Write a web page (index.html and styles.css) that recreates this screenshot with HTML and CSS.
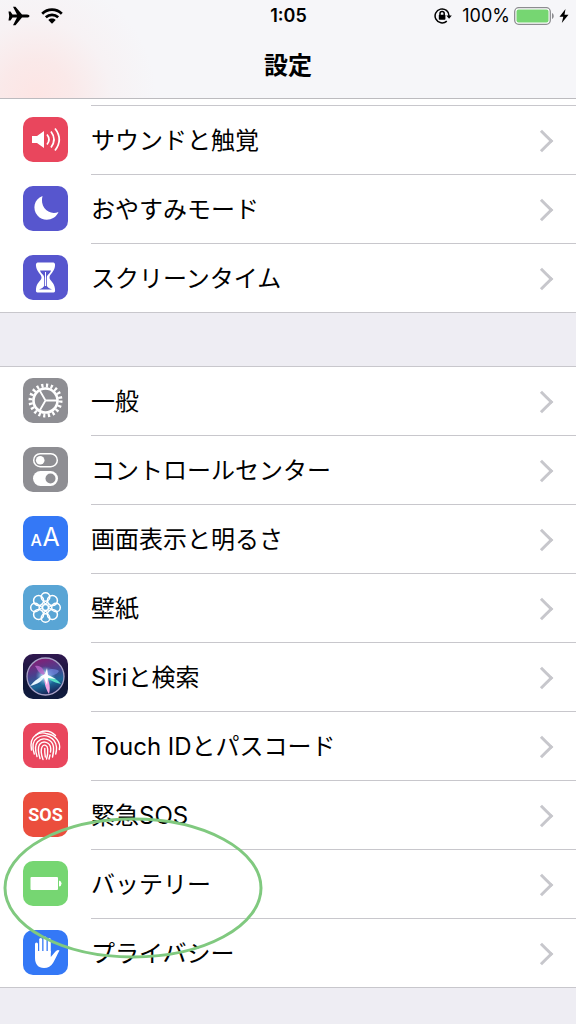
FILE: index.html
```html
<!DOCTYPE html>
<html lang="ja">
<head>
<meta charset="utf-8">
<meta name="viewport" content="width=device-width, initial-scale=1">
<title>設定</title>
<link rel="stylesheet" href="styles.css">
</head>
<body>
<header class="header">
  <div class="status">
    <div class="status-left">
      <svg width="22" height="20" viewBox="0 0 22 20"><path d="M0.500 5.500H2.500L4.500 8.400H9L5 0.700H7.500L14 8.400H19C20.500 8.400 21.500 9.200 21.500 10S20.500 11.600 19 11.600H14L7.500 19.300H5L9 11.600H4.500L2.500 14.500H0.500L1.200 10Z"/></svg>
      <svg width="22" height="16" viewBox="0 0 22 16"><g fill="none" stroke="#000" stroke-width="2.700"><path d="M1.200 5.700C6.800 0.300 15.200 0.300 20.800 5.700"/><path d="M4.800 9.300C8.400 6 13.600 6 17.200 9.300"/></g><path d="M7.300 12C9.500 10.100 12.500 10.100 14.700 12L11 15.700Z"/></svg>
    </div>
    <div class="clock">1:05</div>
    <div class="status-right">
      <svg width="18" height="16" viewBox="0 0 18 16"><g fill="none" stroke="#000" stroke-width="1.500"><path d="M15.100 8A7 7 0 1 0 12.800 13.100"/><path d="M6 7V5.500A2.100 2.100 0 0 1 10.200 5.500V7"/></g><rect x="4.800" y="6.700" width="6.600" height="5" rx="0.700"/><path d="M12.300 7.500H17.800L15.100 10.800Z"/></svg>
      <span class="percent">100%</span>
      <svg width="41" height="18" viewBox="0 0 41 18"><rect x="0.700" y="0.700" width="35.600" height="16.600" rx="4" fill="#fff" stroke="#8c8c90" stroke-width="1.300"/><rect x="2.500" y="2.500" width="32" height="13" rx="2" fill="#76d672"/><path d="M38 6C40.300 7 40.300 11 38 12Z" fill="#8c8c90"/></svg>
      <svg width="10" height="14" viewBox="0 0 10 14"><path d="M6.500 0L0.500 7.800H4.300L2.800 14L9.500 5.800H5.500Z"/></svg>
    </div>
  </div>
  <h1 class="title">設定</h1>
</header>
<main>
  <nav class="group group-first">
    <a class="row" href="#sound">
      <svg class="icon red" viewBox="0 0 45 45"><path fill="#fff" d="M9 19H14L21 14V31L14 26H9Z"/><g fill="none" stroke="#fff" stroke-width="1.700"><path d="M24 17.500Q28 22.500 24 27.500"/><path d="M28 14.500Q34 22.500 28 30.500"/><path d="M32 11.500Q40.500 22.500 32 33.500"/></g></svg>
      <span class="label">サウンドと触覚</span>
    </a>
    <a class="row" href="#dnd">
      <svg class="icon purple" viewBox="0 0 45 45"><path fill="#fff" d="M19.500 10C11 13 9 23 14.500 29.500C20.500 36.500 32 34.500 35.500 26C26 30 16.500 21 19.500 10Z"/></svg>
      <span class="label">おやすみモード</span>
    </a>
    <a class="row" href="#screentime">
      <svg class="icon purple" viewBox="0 0 45 45"><path fill="#fff" d="M14.500 7.500H30.500Q32.500 8 32 11C31.500 17 26.500 19 26.500 22.500S31.500 27 32 34Q32.500 37.500 30.500 37.500H14.500Q12.500 37.500 13 34C13.500 27 18.500 26 18.500 22.500S13.500 17 13 11Q12.500 8 14.500 7.500Z"/><path fill="#5756ce" d="M17 15.500H28C27 19 23.800 19.500 23.800 23V31Q25 33 29 34.500H16Q20 33 21.200 31V23C21.200 19.500 18 19 17 15.500Z"/><path fill="#fff" d="M22 17H23V31H22Z"/></svg>
      <span class="label">スクリーンタイム</span>
    </a>
  </nav>
  <nav class="group">
    <a class="row" href="#general">
      <svg class="icon gray" viewBox="0 0 45 45"><circle cx="22.500" cy="22.500" r="15" fill="none" stroke="#fff" stroke-width="4" stroke-dasharray="2.200 2.512"/><circle cx="22.500" cy="22.500" r="12" fill="none" stroke="#fff" stroke-width="2.600"/><path d="M22.500 22.500H34M22.500 22.500L16.700 12.500M22.500 22.500L16.700 32.500" stroke="#fff" stroke-width="1.800"/></svg>
      <span class="label">一般</span>
    </a>
    <a class="row" href="#control">
      <svg class="icon gray" viewBox="0 0 45 45"><rect x="10.700" y="6.700" width="23.600" height="13" rx="6.500" fill="none" stroke="#fff" stroke-width="1.500"/><circle cx="17.200" cy="13.200" r="4.300" fill="#fff"/><rect x="10" y="24" width="25" height="15" rx="7.500" fill="#fff"/><circle cx="27.500" cy="31.500" r="5" fill="#8e8e93"/></svg>
      <span class="label">コントロールセンター</span>
    </a>
    <a class="row" href="#display">
      <svg class="icon blue" viewBox="0 0 45 45"><text class="glyph" x="7.500" y="30" font-size="16">A</text><text class="glyph glyph-light" x="19.500" y="30" font-size="25">A</text></svg>
      <span class="label">画面表示と明るさ</span>
    </a>
    <a class="row" href="#wallpaper">
      <svg class="icon sky" viewBox="0 0 45 45"><g fill="none" stroke="#fff" stroke-width="1.500"><circle cx="22.500" cy="12" r="4.300"/><circle cx="29.400" cy="15.600" r="5"/><circle cx="33" cy="22.500" r="4.300"/><circle cx="29.400" cy="29.400" r="5"/><circle cx="22.500" cy="33" r="4.300"/><circle cx="15.600" cy="29.400" r="5"/><circle cx="12" cy="22.500" r="4.300"/><circle cx="15.600" cy="15.600" r="5"/><circle cx="22.500" cy="22.500" r="3"/><path d="M22.500 19.500L20 15.500M22.500 19.500L25 15.500M22.500 25.500L20 29.500M22.500 25.500L25 29.500M19.500 22.500L15.500 20M19.500 22.500L15.500 25M25.500 22.500L29.500 20M25.500 22.500L29.500 25" stroke-width="1.300"/></g></svg>
      <span class="label">壁紙</span>
    </a>
    <a class="row" href="#siri">
      <svg class="icon siri" viewBox="0 0 45 45"><defs><linearGradient id="orb" x1="0.300" y1="0" x2="0.600" y2="1"><stop offset="0" stop-color="#8a1c74"/><stop offset="0.400" stop-color="#49408e"/><stop offset="0.700" stop-color="#1b6a9a"/><stop offset="1" stop-color="#181c50"/></linearGradient><radialGradient id="glow"><stop offset="0" stop-color="#fff"/><stop offset="0.400" stop-color="#b8efff" stop-opacity="0.700"/><stop offset="1" stop-color="#50b0e0" stop-opacity="0"/></radialGradient></defs><circle cx="22.500" cy="22.500" r="18.500" fill="url(#orb)" stroke="#a9a3c8" stroke-width="1.300"/><circle cx="22.500" cy="22" r="10" fill="url(#glow)"/><path fill="#bd68cc" fill-opacity="0.800" d="M22 21C15 20 14 14 12 12C18 11 21 15 22 21Z"/><path fill="#7188df" fill-opacity="0.700" d="M22 21C24 14 31 14 36 17C33 22 27 22 22 21Z"/><path fill="#e6f6ff" d="M23 20C17 23 12 26 7 32C15 30 20 27 23 20Z"/><path fill="#56dfc6" d="M22 20C28 22 35 26 38 30C30 28 25 26 22 20Z"/><path fill="#f0a5e4" d="M21 20C26 25 28 32 26 40C22 34 21 27 21 20Z"/><path fill="#fff" d="M17 23L22 20L24 14L25 21L33 25L25 24L24 31L21 24Z"/></svg>
      <span class="label">Siriと検索</span>
    </a>
    <a class="row" href="#touchid">
      <svg class="icon red" viewBox="0 0 45 45"><g fill="none" stroke="#fff" stroke-width="1.400" stroke-linecap="round"><path d="M12.500 12.500C18 6.500 27 6.500 32.500 12.500"/><path d="M8.500 27C5.500 11 18 8.500 24 10.800C33 12 38 20 36.300 26.500"/><path d="M11.300 31C9 24 9.500 18 14 15C22 9.500 32.500 14.500 33.500 24C33.700 27 33.300 29 32.700 31"/><path d="M14 33.500C12 27 12 22 14.500 19C20 13 29.500 16.500 30.500 24C31 28 30.300 31 29.500 34"/><path d="M17 35.500C15 29 14.500 25 16.500 21.500C20 17 27 19 27.700 25Q28 27.500 27.500 29M27 32L26 36"/><path d="M20 36.500C18 31 17.500 27 19 24C21 20.500 24.500 22.500 24.700 26Q25 32 23.500 36"/><path d="M21.800 25.500Q21.500 29 22.300 34"/></g></svg>
      <span class="label">Touch IDとパスコード</span>
    </a>
    <a class="row" href="#sos">
      <svg class="icon vermilion" viewBox="0 0 45 45"><text class="sos" x="22.500" y="29" text-anchor="middle">SOS</text></svg>
      <span class="label">緊急SOS</span>
    </a>
    <a class="row marked" href="#battery">
      <svg class="icon green" viewBox="0 0 45 45"><rect x="7.500" y="16" width="27.500" height="13" rx="1" fill="#fff"/><path fill="#fff" d="M36 19.500Q38.500 20 38.500 22.500T36 25.500Z"/></svg>
      <span class="label">バッテリー</span>
      <svg class="marker" width="260" height="142" viewBox="0 0 260 142"><ellipse cx="130" cy="71" rx="128" ry="69" fill="none" stroke="#80c97f" stroke-width="3"/></svg>
    </a>
    <a class="row" href="#privacy">
      <svg class="icon blue" viewBox="0 0 45 45"><g fill="none" stroke="#fff" stroke-width="3" stroke-linecap="round"><path d="M13.500 25V14"/><path d="M17.700 22V9.500"/><path d="M22 22V8"/><path d="M26.300 22V9.500"/></g><path fill="#fff" d="M12 21H27.800V27L32.500 21.500Q34.500 19 36.500 20.500C34.500 24 32.500 29 30 33Q27 38 21 38C15 38 12 34 12 28Z"/></svg>
      <span class="label">プライバシー</span>
    </a>
  </nav>
</main>
</body>
</html>
```
FILE: styles.css
```css
* {
  box-sizing: border-box;
}

body {
  margin: 0;
  min-height: 100vh;
  background: #eeedf3;
  color: #000;
  font-family: Inter, "Noto Sans CJK JP", sans-serif;
}

svg {
  display: block;
  flex: none;
}

.header {
  height: 99px;
  border-bottom: 1px solid #bcbbbf;
  background: radial-gradient(circle at 36px 96px, #fde5e4 0, #fae9e9 35px, #f7f2f4 75px, #f6f6f9 120px);
}

.status {
  display: grid;
  grid-template-columns: 1fr auto 1fr;
  align-items: center;
  height: 32px;
  padding: 0 7px 0 8px;
}

.status-left,
.status-right {
  display: flex;
  align-items: center;
}

.status-left {
  gap: 11px;
}

.status-right {
  justify-content: flex-end;
  gap: 4px;
}

.clock {
  font-size: 18px;
  font-weight: 600;
  line-height: 32px;
}

.percent {
  margin-left: 6px;
  font-size: 18px;
  line-height: 32px;
}

.title {
  margin: 0;
  font-size: 24px;
  font-weight: 700;
  line-height: 68px;
  text-align: center;
}

.group {
  margin-bottom: 53px;
  border-top: 1px solid #c8c7cc;
  background: #fff;
}

.group-first {
  padding-top: 6px;
  border-top: 0;
}

.row {
  position: relative;
  display: flex;
  align-items: center;
  gap: 23px;
  padding-left: 23px;
  color: inherit;
  text-decoration: none;
}

.row:last-child {
  border-bottom: 1px solid #c8c7cc;
}

.icon {
  width: 45px;
  height: 45px;
  margin-bottom: 2px;
  border-radius: 10px;
}

.label {
  display: flex;
  flex: 1;
  align-items: center;
  justify-content: space-between;
  height: 69px;
  padding: 1px 26px 0 0;
  border-bottom: 1px solid #c8c7cc;
  font-size: 24px;
  font-weight: 400;
  line-height: 36px;
}

.row:last-child .label {
  height: 68px;
  border-bottom: 0;
}

.group-first .row:first-child .label {
  height: 70px;
  border-top: 1px solid #c8c7cc;
}

.label::after {
  content: "";
  width: 13px;
  height: 13px;
  border-top: 3px solid #c7c7cc;
  border-right: 3px solid #c7c7cc;
  transform: rotate(45deg);
}

.red {
  background: #e9465d;
}

.purple {
  background: #5756ce;
}

.gray {
  background: #8e8e93;
}

.blue {
  background: #3478f6;
}

.sky {
  background: #59a5d5;
}

.siri {
  background: linear-gradient(#301850, #101535 60%, #101c40);
}

.vermilion {
  background: #eb4e3d;
}

.green {
  background: #76d672;
}

.glyph {
  fill: #fff;
  font-family: Inter, sans-serif;
  font-weight: 500;
}

.glyph-light {
  font-weight: 400;
}

.sos {
  fill: #fff;
  font-family: Roboto, sans-serif;
  font-size: 18px;
  font-weight: 700;
}

.marked {
  z-index: 1;
}

.marker {
  position: absolute;
  top: -33px;
  left: 3px;
  pointer-events: none;
}
```
